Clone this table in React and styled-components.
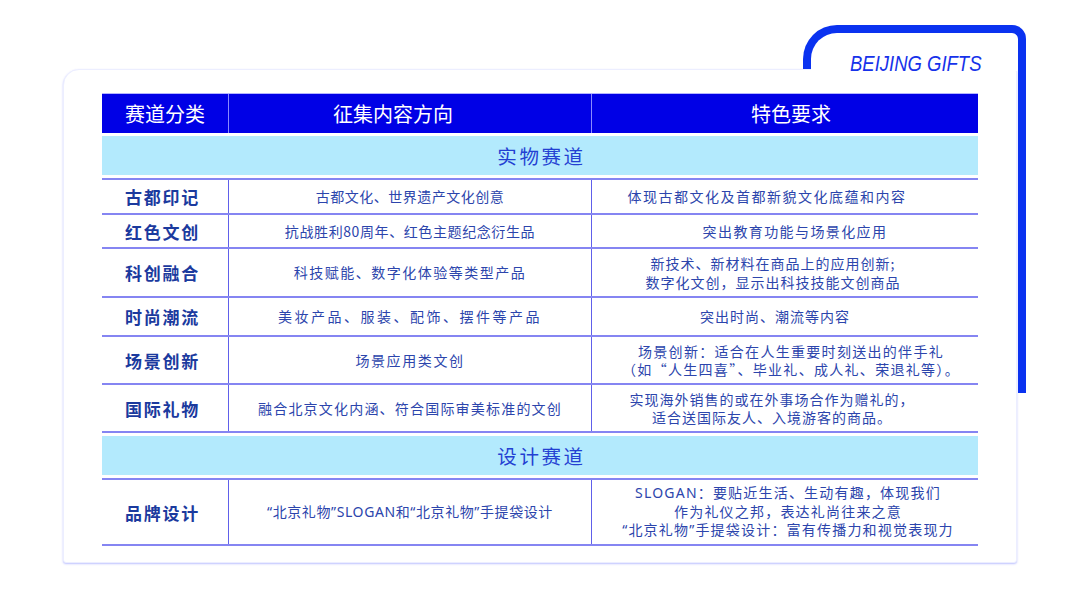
import React from 'react';
import styled, { createGlobalStyle } from 'styled-components';

const GlobalStyle = createGlobalStyle`
  html, body {
    margin: 0;
    padding: 0;
    background: #ffffff;
  }
  body {
    font-family: "Noto Sans CJK SC", "Noto Sans", sans-serif;
  }
  * {
    box-sizing: border-box;
  }
`;

// 표 데이터
const physicalRows = [
  { label: '古都印记', height: 35, content: ['古都文化、世界遗产文化创意'], ls: 0.5, spec: ['体现古都文化及首都新貌文化底蕴和内容'], shift: -18, specLs: 1.5 },
  { label: '红色文创', height: 34, content: ['抗战胜利80周年、红色主题纪念衍生品'], ls: 0.6, spec: ['突出教育功能与场景化应用'], shift: 10, specLs: 1.4 },
  { label: '科创融合', height: 49, content: ['科技赋能、数字化体验等类型产品'], ls: 1.5, spec: ['新技术、新材料在商品上的应用创新;', '数字化文创，显示出科技技能文创商品'], shift: -12 },
  { label: '时尚潮流', height: 39, content: ['美妆产品、服装、配饰、摆件等产品'], ls: 2.5, spec: ['突出时尚、潮流等内容'], shift: -10 },
  { label: '场景创新', height: 48, content: ['场景应用类文创'], ls: 1.6, spec: ['场景创新：适合在人生重要时刻送出的伴手礼', '（如“人生四喜”、毕业礼、成人礼、荣退礼等）。'], shift: 6, specLs: 1.3 },
  { label: '国际礼物', height: 48, content: ['融合北京文化内涵、符合国际审美标准的文创'], ls: 1.2, spec: ['实现海外销售的或在外事场合作为赠礼的，', '适合送国际友人、入境游客的商品。'], shift: -13 },
];

const designRows = [
  { label: '品牌设计', height: 66, latin: true, content: ['“北京礼物”SLOGAN和“北京礼物”手提袋设计'], ls: 0.6, spec: ['SLOGAN：要贴近生活、生动有趣，体现我们', '作为礼仪之邦，表达礼尚往来之意', '“北京礼物”手提袋设计：富有传播力和视觉表现力'], shift: 3, specLs: 1.2 },
];

const DataRows = ({ rows }) => (
  <>
    {rows.map((row, index) => (
      <DataRow key={row.label} $height={row.height} $closed={index === rows.length - 1}>
        <LabelCell>{row.label}</LabelCell>
        <TextCell $ls={row.ls} $latin={row.latin}>
          {row.content.map((line) => <Line key={line}>{line}</Line>)}
        </TextCell>
        <TextCell $ls={row.specLs ?? 1} $shift={row.shift} $latin={row.latin}>
          {row.spec.map((line) => <Line key={line}>{line}</Line>)}
        </TextCell>
      </DataRow>
    ))}
  </>
);

const App = () => {
  return (
    <Stage>
      <GlobalStyle />
      <Frame />
      <BrandMark>BEIJING GIFTS</BrandMark>

      <Card>
        <Table>
          <HeaderRow>
            <HeaderCell>赛道分类</HeaderCell>
            <HeaderCell $shift={-17}>征集内容方向</HeaderCell>
            <HeaderCell $shift={6}>特色要求</HeaderCell>
          </HeaderRow>

          <SectionRow>实物赛道</SectionRow>
          <DataRows rows={physicalRows} />

          <SectionRow>设计赛道</SectionRow>
          <DataRows rows={designRows} />
        </Table>
      </Card>
    </Stage>
  );
};

// 스타일 컴포넌트
const Stage = styled.div`
  position: relative;
  width: 1080px;
  height: 608px;
  padding: 69px 0 0 63px;
  overflow: hidden;
  background: #ffffff;
`;

// 오른쪽 위 파란 테두리 장식
const Frame = styled.div`
  position: absolute;
  left: 803px;
  top: 25px;
  width: 223px;
  height: 368px;
  border: 8px solid #0a32f0;
  border-bottom: none;
  border-radius: 34px 14px 0 0;
  z-index: 0;
`;

const BrandMark = styled.div`
  position: absolute;
  left: 850px;
  top: 52px;
  z-index: 2;
  font-family: "Liberation Sans", Arial, sans-serif;
  font-style: italic;
  font-size: 21.5px;
  color: #1632ea;
  white-space: nowrap;
  transform: scaleX(0.86);
  transform-origin: left center;
`;

const Card = styled.div`
  position: relative;
  z-index: 1;
  width: 954px;
  height: 494px;
  background: #ffffff;
  border: 1px solid #eceeff;
  border-radius: 16px 3px 3px 3px;
  box-shadow: 0 1px 2px rgba(110, 120, 255, 0.45);
  padding: 23px 0 0 38px;

  /* 파란 테두리 안쪽에서는 카드 윗선이 보이지 않음 */
  &::before {
    content: '';
    position: absolute;
    top: -2px;
    left: 747px;
    right: -1px;
    height: 3px;
    background: #ffffff;
  }
`;

const Table = styled.div`
  width: 876px;
  display: flex;
  flex-direction: column;
`;

const columns = '126px 363px 1fr';

const shiftPadding = (props) => {
  const s = props.$shift || 0;
  return `
    padding-left: ${Math.max(0, s * 2)}px;
    padding-right: ${Math.max(0, -s * 2)}px;
  `;
};

const HeaderRow = styled.div`
  display: grid;
  grid-template-columns: ${columns};
  height: 40px;
  background: #0000e6;
  border-top: 1px solid #b4b4ff;
`;

const HeaderCell = styled.div`
  display: flex;
  align-items: center;
  justify-content: center;
  color: #ffffff;
  font-size: 20px;
  ${shiftPadding}

  & + & {
    border-left: 1px solid #8a8aff;
  }
`;

const SectionRow = styled.div`
  height: 39px;
  margin: 3px 0;
  background: #b3eafd;
  display: flex;
  align-items: center;
  justify-content: center;
  color: #2340d2;
  font-size: 19.5px;
  letter-spacing: 2.6px;
  padding-left: 3px;
`;

const DataRow = styled.div`
  display: grid;
  grid-template-columns: ${columns};
  height: ${(props) => props.$height + (props.$closed ? 2 : 0)}px;
  border-top: 2px solid #8585f2;
  border-bottom: ${(props) => (props.$closed ? '2px solid #8585f2' : 'none')};
`;

const LabelCell = styled.div`
  display: flex;
  align-items: center;
  justify-content: center;
  padding-right: 5px;
  color: #1b3a9e;
  font-size: 17px;
  font-weight: 700;
  letter-spacing: 1.8px;
`;

const TextCell = styled.div`
  display: flex;
  flex-direction: column;
  align-items: center;
  justify-content: center;
  border-left: 1.5px solid #6060ea;
  color: #2c45ac;
  font-family: ${(props) => (props.$latin
    ? '"Noto Sans", "Noto Sans CJK SC", sans-serif'
    : '"Noto Sans CJK SC", "Noto Sans", sans-serif')};
  font-size: 14px;
  line-height: 18.5px;
  letter-spacing: ${(props) => props.$ls}px;
  ${shiftPadding}
`;

const Line = styled.div`
  white-space: nowrap;
  text-align: center;
`;

export default App;
